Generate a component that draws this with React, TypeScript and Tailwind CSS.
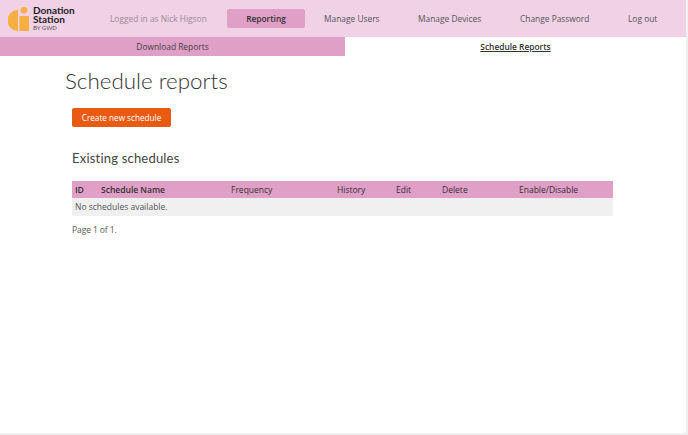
export default function App() {
  const navItems = [
    { label: "Manage Users", width: "w-[94px]" },
    { label: "Manage Devices", width: "w-[102px]" },
    { label: "Change Password", width: "w-[108px]" },
    { label: "Log out", width: "w-[58px]" },
  ];

  return (
    <div className="h-[435px] w-[688px] overflow-hidden bg-[#f0f0f0] font-['Open_Sans',sans-serif] text-[#3c3c3c]">
      <div className="h-[433px] w-[686px] rounded-br-[3px] bg-white">
        {/* Header */}
        <header className="flex h-[37px] items-center bg-[#f0d1e6] text-[8.4px]">
          <div className="ml-[8px] flex w-[102px] items-center font-['Lato',sans-serif]">
            <svg width="21" height="24" viewBox="0 0 21 24" className="shrink-0">
              <path d="M10 3 A10.5 10.5 0 0 0 10 24 Z" fill="#f5b041" />
              <circle cx="16" cy="3.3" r="3.3" fill="#f5b041" />
              <path d="M11.5 9 H20 a1 1 0 0 1 1 1 V24 H12.5 a1 1 0 0 1 -1 -1 Z" fill="#f5b041" />
            </svg>
            <div className="ml-[4px] flex flex-col">
              <span className="text-[10px] leading-[9px] font-bold text-[#222]">Donation</span>
              <span className="text-[10px] leading-[9px] font-bold text-[#222]">Station</span>
              <span className="text-[6px] leading-[7px] text-[#555]">BY GWD</span>
            </div>
          </div>
          <span className="w-[117px] whitespace-nowrap pt-[1px] text-[#9a8b96]">Logged in as Nick Higson</span>
          <a className="flex h-[19px] w-[78px] items-center justify-center rounded-[2px] bg-[#e09fc6] pt-[1px] font-semibold text-[#333]">
            Reporting
          </a>
          <span className="w-[19px]" />
          {navItems.map((item) => (
            <a key={item.label} className={`${item.width} whitespace-nowrap pt-[1px] text-[#555]`}>
              {item.label}
            </a>
          ))}
        </header>

        {/* Sub navigation */}
        <nav className="flex h-[19px] text-[8.4px]">
          <a className="flex w-[345px] items-center justify-center bg-[#e09fc6] pt-[1px] text-[#444]">
            Download Reports
          </a>
          <a className="flex flex-1 items-center justify-center pt-[1px] font-semibold text-[#333] underline">
            Schedule Reports
          </a>
        </nav>

        <main className="pl-[65px]">
          <h1 className="mt-[11px] font-['Lato',sans-serif] text-[22.4px] leading-[27px] font-light text-[#333]">
            Schedule reports
          </h1>
          <div className="pl-[7px]">
            <button className="mt-[14px] flex h-[19px] w-[99px] items-center justify-center rounded-[2px] bg-[#e95b12] pt-[1px] text-[8.2px] text-white">
              Create new schedule
            </button>
            <h2 className="mt-[23px] font-['Lato',sans-serif] text-[13px] leading-[17px] tracking-[0.2px] text-[#444]">
              Existing schedules
            </h2>
            <table className="mt-[14px] w-[541px] table-fixed border-collapse text-[8.5px]">
              <thead>
                <tr className="h-[17px] bg-[#e09fc6] text-left text-[#333]">
                  <th className="w-[29px] pl-[3px] pt-[2px] font-semibold">ID</th>
                  <th className="w-[130px] pt-[2px] font-semibold">Schedule Name</th>
                  <th className="w-[106px] pt-[2px] font-normal">Frequency</th>
                  <th className="w-[59px] pt-[2px] font-normal">History</th>
                  <th className="w-[46px] pt-[2px] font-normal">Edit</th>
                  <th className="w-[77px] pt-[2px] font-normal">Delete</th>
                  <th className="pt-[2px] font-normal">Enable/Disable</th>
                </tr>
              </thead>
              <tbody>
                <tr className="h-[18px] bg-[#f0f0f0]">
                  <td colSpan={7} className="pl-[3px] pt-[1px] text-[#555]">
                    No schedules available.
                  </td>
                </tr>
              </tbody>
            </table>
            <p className="mt-[8px] text-[8.5px] leading-[12px] tracking-[-0.1px] text-[#555]">Page 1 of 1.</p>
          </div>
        </main>
      </div>
    </div>
  );
}
